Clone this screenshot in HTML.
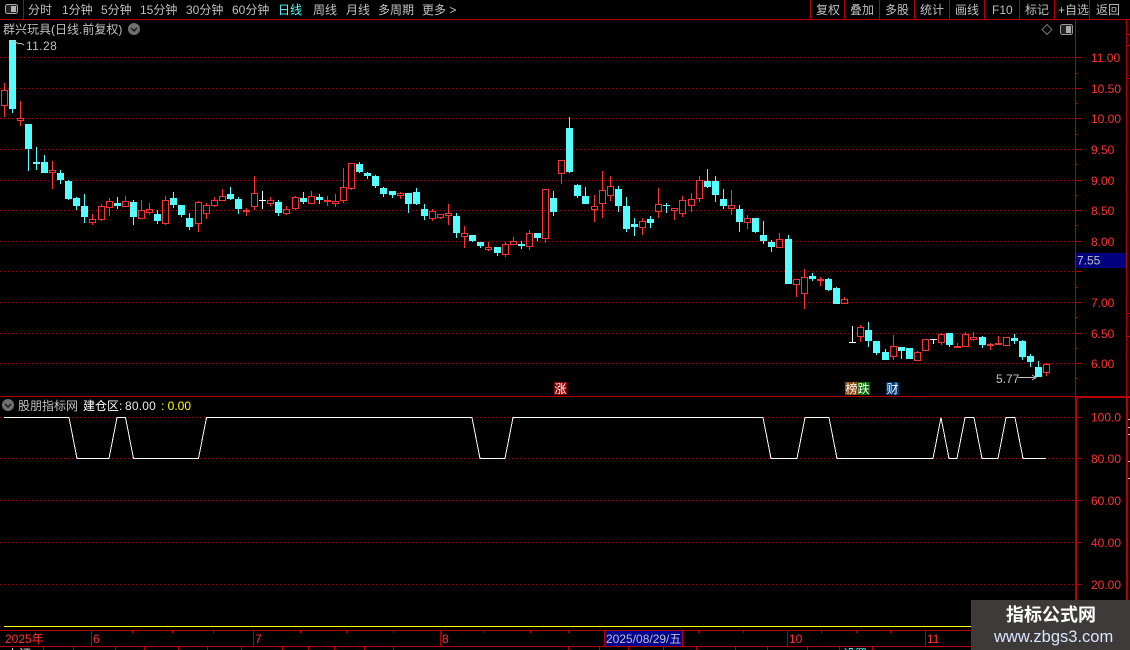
<!DOCTYPE html>
<html><head><meta charset="utf-8"><style>
html,body{margin:0;padding:0;background:#000;width:1130px;height:650px;overflow:hidden}
svg{display:block;position:absolute;left:0;top:0}
text{font-family:"Liberation Sans","WenQuanYi Zen Hei","Noto Sans CJK SC",sans-serif;font-size:12px;white-space:pre}
.g text{fill:#c0c0c0}.r text{fill:#ff3232}
</style></head><body>
<svg width="1130" height="650" viewBox="0 0 1130 650">
<g shape-rendering="crispEdges">
<g stroke="#b00000" stroke-width="1" stroke-dasharray="1 3" fill="none">
<path d="M0 57.5H1075M0 88.5H1075M0 118.5H1075M0 149.5H1075M0 180.5H1075M0 210.5H1075M0 241.5H1075M0 271.5H1075M0 302.5H1075M0 333.5H1075M0 363.5H1075M0 417.5H1075M0 458.5H1075M0 500.5H1075M0 542.5H1075M0 584.5H1075"/>
</g>
<g stroke="#b80000" stroke-width="1" fill="none">
<path d="M0 19.5H1130M23.5 0V19M810.5 0V19M844.5 0V19M879.5 0V19M914.5 0V19M949.5 0V19M984.5 0V19M1019.5 0V19M1054.5 0V19M1089.5 0V19"/>
<path d="M1075.5 20V630M1126.5 20V630M0 396.5H1130M0 630.5H1130M0 646.5H1130"/>
<path d="M1076.5 397V630M1127.5 397V630M1075 397.5H1130"/>
<path d="M1075 57.5h6M1075 88.5h6M1075 118.5h6M1075 149.5h6M1075 180.5h6M1075 210.5h6M1075 241.5h6M1075 271.5h6M1075 302.5h6M1075 333.5h6M1075 363.5h6M1075 73.5h3M1075 103.5h3M1075 134.5h3M1075 164.5h3M1075 195.5h3M1075 225.5h3M1075 256.5h3M1075 287.5h3M1075 317.5h3M1075 348.5h3M1075 378.5h3"/>
<path d="M1075 417.5h6M1075 458.5h6M1075 500.5h6M1075 542.5h6M1075 584.5h6M1075 437.5h3M1075 479.5h3M1075 521.5h3M1075 563.5h3M1075 605.5h3"/>
<path d="M1126 34.5h4M1126 45.5h4M1126 78.5h3M1126 313.5h3M1126 336.5h4"/>
<path d="M91.5 630V646M253.5 630V646M440.5 630V646M787.5 630V646M925.5 630V646M132.5 630V633M172.5 630V633M213.5 630V633M300.5 630V633M346.5 630V633M393.5 630V633M483.5 630V633M530.5 630V633M568.5 630V633M698.5 630V633M743.5 630V633M821.5 630V633M856.5 630V633M890.5 630V633"/>
<path d="M43.5 646V650M73.5 646V650M115.5 646V650M144.5 646V650M178.5 646V650M207.5 646V650M241.5 646V650M282.5 646V650M308.5 646V650M334.5 646V650M364.5 646V650M393.5 646V650M568.5 646V650M599.5 646V650M628.5 646V650M663.5 646V650M696.5 646V650M735.5 646V650M767.5 646V650M807.5 646V650M839.5 646V650M872.5 646V650"/>
</g>
<path d="M1128 419.5h2M1128 427.5h2M1128 434.5h2M1128 461.5h2M1128 478.5h2" stroke="#c0c0c0" fill="none"/>
<path d="M4 626.5H1130" stroke="#ffff00" stroke-width="1" fill="none"/>
<rect x="1076" y="253" width="50" height="15" fill="#000080"/>
<rect x="554" y="382" width="13" height="13" fill="#8a0000"/>
<rect x="845" y="382" width="13" height="13" fill="#8a4a10"/>
<rect x="857" y="382" width="13" height="13" fill="#006e00"/>
<rect x="886" y="382" width="13" height="13" fill="#003a70"/>
<rect x="604.5" y="630.5" width="78" height="16" fill="#000090" stroke="#b80000"/>

<path fill="none" stroke="#54ffff" stroke-width="1" d="M12.5 40V113M28.5 124V171M36.5 147V170M44.5 155V173M60.5 170V184M68.5 180V200M76.5 197V210M84.5 194V223M117.5 197V209M133.5 200V225M157.5 210V224M173.5 192V208M181.5 205V217M189.5 213V230M230.5 187V200M238.5 197V214M278.5 200V216M303.5 192V204M319.5 194V204M359.5 162V173M367.5 172V179M375.5 175V188M383.5 187V197M392.5 191V198M408.5 193V213M416.5 188V205M424.5 204V220M456.5 213V238M472.5 235V242M480.5 242V248M497.5 247V256M521.5 241V249M537.5 233V241M553.5 191V216M569.5 117V173M577.5 184V198M585.5 187V204M618.5 186V212M626.5 197V232M634.5 218V236M650.5 216V228M666.5 203V213M707.5 169V188M715.5 176V202M723.5 189V209M739.5 205V232M755.5 218V233M763.5 221V244M771.5 240V252M788.5 235V284M812.5 273V281M828.5 278V291M836.5 287V304M868.5 322V347M876.5 341V355M885.5 349V360M901.5 347V359M909.5 348V359M949.5 333V347M982.5 336V348M1014.5 334V344M1022.5 340V360M1030.5 354V367M1038.5 361V377"/>
<path fill="none" stroke="#54ffff" stroke-width="7" d="M12.5 40V109M28.5 124V149M36.5 162V164M44.5 162V173M60.5 173V180M68.5 181V199M76.5 198V206M84.5 206V217M117.5 203V206M133.5 202V217M157.5 214V221M173.5 198V205M181.5 205V215M189.5 218V227M230.5 194V199M238.5 199V209M278.5 202V213M303.5 198V202M319.5 197V200M359.5 164V172M367.5 173V176M375.5 176V186M383.5 188V194M392.5 191V195M408.5 193V204M416.5 192V204M424.5 209V216M456.5 216V233M472.5 235V241M480.5 242V246M497.5 247V253M521.5 244V246M537.5 233V238M553.5 198V212M569.5 128V172M577.5 185V196M585.5 196V204M618.5 189V206M626.5 206V229M634.5 224V227M650.5 219V223M666.5 205V206M707.5 181V187M715.5 181V195M723.5 199V206M739.5 209V222M755.5 218V232M763.5 235V241M771.5 242V247M788.5 239V284M812.5 276V279M828.5 279V290M836.5 288V304M868.5 330V341M876.5 341V353M885.5 352V360M901.5 347V351M909.5 348V359M949.5 333V345M982.5 337V345M1014.5 338V341M1022.5 341V357M1030.5 356V362M1038.5 367V377"/>

<path fill="none" stroke="#ff3232" stroke-width="1" d="M4.5 83V90M4.5 106V117M20.5 101V118M20.5 121V126M52.5 161V170M52.5 173V189M92.5 214V219M92.5 223V225M101.5 204V206M101.5 220V221M109.5 198V201M109.5 208V216M125.5 196V201M141.5 200V210M149.5 203V209M149.5 213V215M165.5 196V200M165.5 224V225M198.5 201V202M198.5 224V232M206.5 203V205M206.5 214V219M214.5 197V200M214.5 206V207M222.5 189V196M246.5 208V216M254.5 176V193M254.5 207V210M270.5 197V200M270.5 204V206M286.5 206V209M286.5 214V215M295.5 196V197M295.5 209V210M311.5 191V196M327.5 196V206M335.5 194V201M335.5 204V207M343.5 168V187M343.5 201V203M351.5 189V190M400.5 192V193M400.5 196V199M432.5 209V211M432.5 219V221M440.5 218V219M448.5 204V213M448.5 216V225M464.5 226V233M464.5 237V248M488.5 242V247M488.5 250V251M505.5 242V244M505.5 255V257M513.5 237V241M529.5 230V233M529.5 247V250M545.5 239V243M561.5 174V184M594.5 195V206M594.5 210V222M602.5 171V190M602.5 204V218M610.5 176V186M610.5 196V201M642.5 218V221M642.5 228V235M658.5 188V204M658.5 212V218M674.5 211V220M682.5 196V200M682.5 214V217M691.5 193V199M691.5 206V212M699.5 176V180M699.5 199V202M731.5 190V205M731.5 209V215M747.5 215V218M747.5 223V229M779.5 233V239M796.5 285V297M804.5 269V277M804.5 294V309M820.5 277V286M844.5 297V299M860.5 325V327M860.5 337V342M893.5 335V346M893.5 357V360M917.5 351V352M941.5 333V334M941.5 343V345M957.5 343V346M965.5 332V334M973.5 332V337M973.5 340V341M990.5 343V350M998.5 336V343M1046.5 363V364M1046.5 373V376"/>
<path fill="none" stroke="#ff3232" stroke-width="1" d="M1.5 90.5h6v15h-6zM17.5 118.5h6v2h-6zM49.5 170.5h6v2h-6zM89.5 219.5h6v3h-6zM98.5 206.5h6v13h-6zM106.5 201.5h6v6h-6zM122.5 201.5h6v5h-6zM138.5 210.5h6v8h-6zM146.5 209.5h6v3h-6zM162.5 200.5h6v23h-6zM195.5 202.5h6v21h-6zM203.5 205.5h6v8h-6zM211.5 200.5h6v5h-6zM219.5 196.5h6v4h-6zM251.5 193.5h6v13h-6zM267.5 200.5h6v3h-6zM283.5 209.5h6v4h-6zM292.5 197.5h6v11h-6zM308.5 196.5h6v7h-6zM332.5 201.5h6v2h-6zM340.5 187.5h6v13h-6zM348.5 163.5h6v25h-6zM397.5 193.5h6v2h-6zM429.5 211.5h6v7h-6zM437.5 214.5h6v3h-6zM445.5 213.5h6v2h-6zM461.5 233.5h6v3h-6zM485.5 247.5h6v2h-6zM502.5 244.5h6v10h-6zM510.5 241.5h6v3h-6zM526.5 233.5h6v13h-6zM542.5 189.5h6v49h-6zM558.5 160.5h6v13h-6zM591.5 206.5h6v3h-6zM599.5 190.5h6v13h-6zM607.5 186.5h6v9h-6zM639.5 221.5h6v6h-6zM655.5 204.5h6v7h-6zM671.5 208.5h6v2h-6zM679.5 200.5h6v13h-6zM688.5 199.5h6v6h-6zM696.5 180.5h6v18h-6zM728.5 205.5h6v3h-6zM744.5 218.5h6v4h-6zM776.5 239.5h6v8h-6zM793.5 279.5h6v5h-6zM801.5 277.5h6v16h-6zM841.5 299.5h6v4h-6zM857.5 327.5h6v9h-6zM890.5 346.5h6v10h-6zM914.5 352.5h6v8h-6zM922.5 339.5h6v11h-6zM938.5 334.5h6v8h-6zM954.5 346.5h6v1h-6zM962.5 334.5h6v12h-6zM970.5 337.5h6v2h-6zM995.5 343.5h6v1h-6zM1003.5 337.5h6v8h-6zM1043.5 364.5h6v8h-6z"/>
<path fill="none" stroke="#ff3232" stroke-width="2" d="M243 211h7M324 201h7M817 280h7M987 345h7"/>
<path fill="none" stroke="#fff" stroke-width="1" d="M262.5 191V209M259 200.5h7M852.5 326V342M849 342.5h7M933.5 339V344M930 339.5h7"/>

<polyline fill="none" stroke="#fff" stroke-width="1" points="4,417.5 69,417.5 77,458.5 109,458.5 117,417.5 125.5,417.5 133.5,458.5 198.5,458.5 206.5,417.5 472,417.5 480,458.5 505,458.5 513,417.5 763,417.5 771,458.5 797,458.5 805,417.5 829,417.5 837,458.5 933,458.5 941,417.5 949,458.5 957,458.5 965,417.5 974,417.5 982,458.5 998,458.5 1006,417.5 1015,417.5 1023,458.5 1046,458.5"/>
</g>

<!-- toolbar icon -->
<rect x="5.5" y="4.5" width="12" height="9" rx="2" fill="#222" stroke="#aaa"/>
<rect x="11" y="6" width="5" height="6" fill="#b4b4b4"/>
<rect x="1060.5" y="24.5" width="12" height="10" rx="2" fill="#222" stroke="#999"/>
<rect x="1066" y="26" width="5" height="7" fill="#aaa"/>
<path d="M1047 24.5l5 5-5 5-5-5z" fill="none" stroke="#777"/>
<circle cx="134" cy="29" r="6" fill="#707070"/>
<path d="M131 28l3 3 3-3" fill="none" stroke="#111" stroke-width="1.3"/>
<circle cx="8" cy="405" r="6" fill="#707070"/>
<path d="M5 404l3 3 3-3" fill="none" stroke="#111" stroke-width="1.3"/>

<path d="M13 41l-1 2M13 41l3 1.5M16 42.5q3 1.5 4 1t4 1.5" fill="none" stroke="#c0c0c0"/>
<path d="M1018 377.5H1036M1032 375l4 2.5-4 2.5" fill="none" stroke="#c0c0c0"/>

<g class="g">
<text x="28" y="14">分时</text>
<text x="62" y="14">1分钟</text>
<text x="101" y="14">5分钟</text>
<text x="140" y="14">15分钟</text>
<text x="186" y="14">30分钟</text>
<text x="232" y="14">60分钟</text>
<text x="278" y="14" style="fill:#54ffff">日线</text>
<text x="313" y="14">周线</text>
<text x="346" y="14">月线</text>
<text x="378" y="14">多周期</text>
<text x="422" y="14">更多 &gt;</text>
<text x="816" y="14">复权</text>
<text x="850" y="14">叠加</text>
<text x="885" y="14">多股</text>
<text x="920" y="14">统计</text>
<text x="955" y="14">画线</text>
<text x="992" y="14">F10</text>
<text x="1025" y="14">标记</text>
<text x="1058" y="14">+自选</text>
<text x="1096" y="14">返回</text>
<text x="3" y="33.5">群兴玩具(日线.前复权)</text>
<text x="26" y="50" letter-spacing=".4">11.28</text>
<text x="996" y="383">5.77</text>
<text x="18" y="410">股朋指标网</text>
<text x="1077" y="264.5">7.55</text>
<text x="606" y="643">2025/08/29/五</text>
</g>
<text x="83" y="410" fill="#fff">建仓区:</text>
<text x="125" y="410" fill="#e8e8e8" letter-spacing=".2">80.00</text>
<text x="161" y="410" fill="#ffff00">: 0.00</text>
<text x="554.5" y="393" fill="#fff">涨</text>
<text x="845.5" y="393" fill="#fff">榜</text>
<text x="857.5" y="393" fill="#fff">跌</text>
<text x="886.5" y="393" fill="#fff">财</text>

<g class="r">
<text x="1091" y="62">11.00</text><text x="1091" y="93">10.50</text><text x="1091" y="123">10.00</text><text x="1091" y="154">9.50</text><text x="1091" y="185">9.00</text><text x="1091" y="215">8.50</text><text x="1091" y="246">8.00</text><text x="1091" y="307">7.00</text><text x="1091" y="338">6.50</text><text x="1091" y="368">6.00</text>
<text x="1091" y="421.5">100.0</text><text x="1091" y="463">80.00</text><text x="1091" y="505">60.00</text><text x="1091" y="547">40.00</text><text x="1091" y="589">20.00</text>
<text x="5" y="643">2025年</text><text x="93" y="643">6</text><text x="255" y="643">7</text><text x="442" y="643">8</text><text x="789" y="643">10</text><text x="927" y="643">11</text>
</g>
<text x="7" y="658" fill="#e0e0e0">上证</text>
<text x="843" y="658" fill="#54ffff">设置</text>

<rect x="971" y="600" width="159" height="50" fill="#3f3a3a"/>
<text x="1006" y="621" fill="#fff" style="font-size:18px;font-weight:bold;font-family:'Noto Sans CJK SC',sans-serif">指标公式网</text>
<text x="994" y="642" fill="#d8e6ff" style="font-size:16.5px">www.zbgs3.com</text>
</svg>
</body></html>
